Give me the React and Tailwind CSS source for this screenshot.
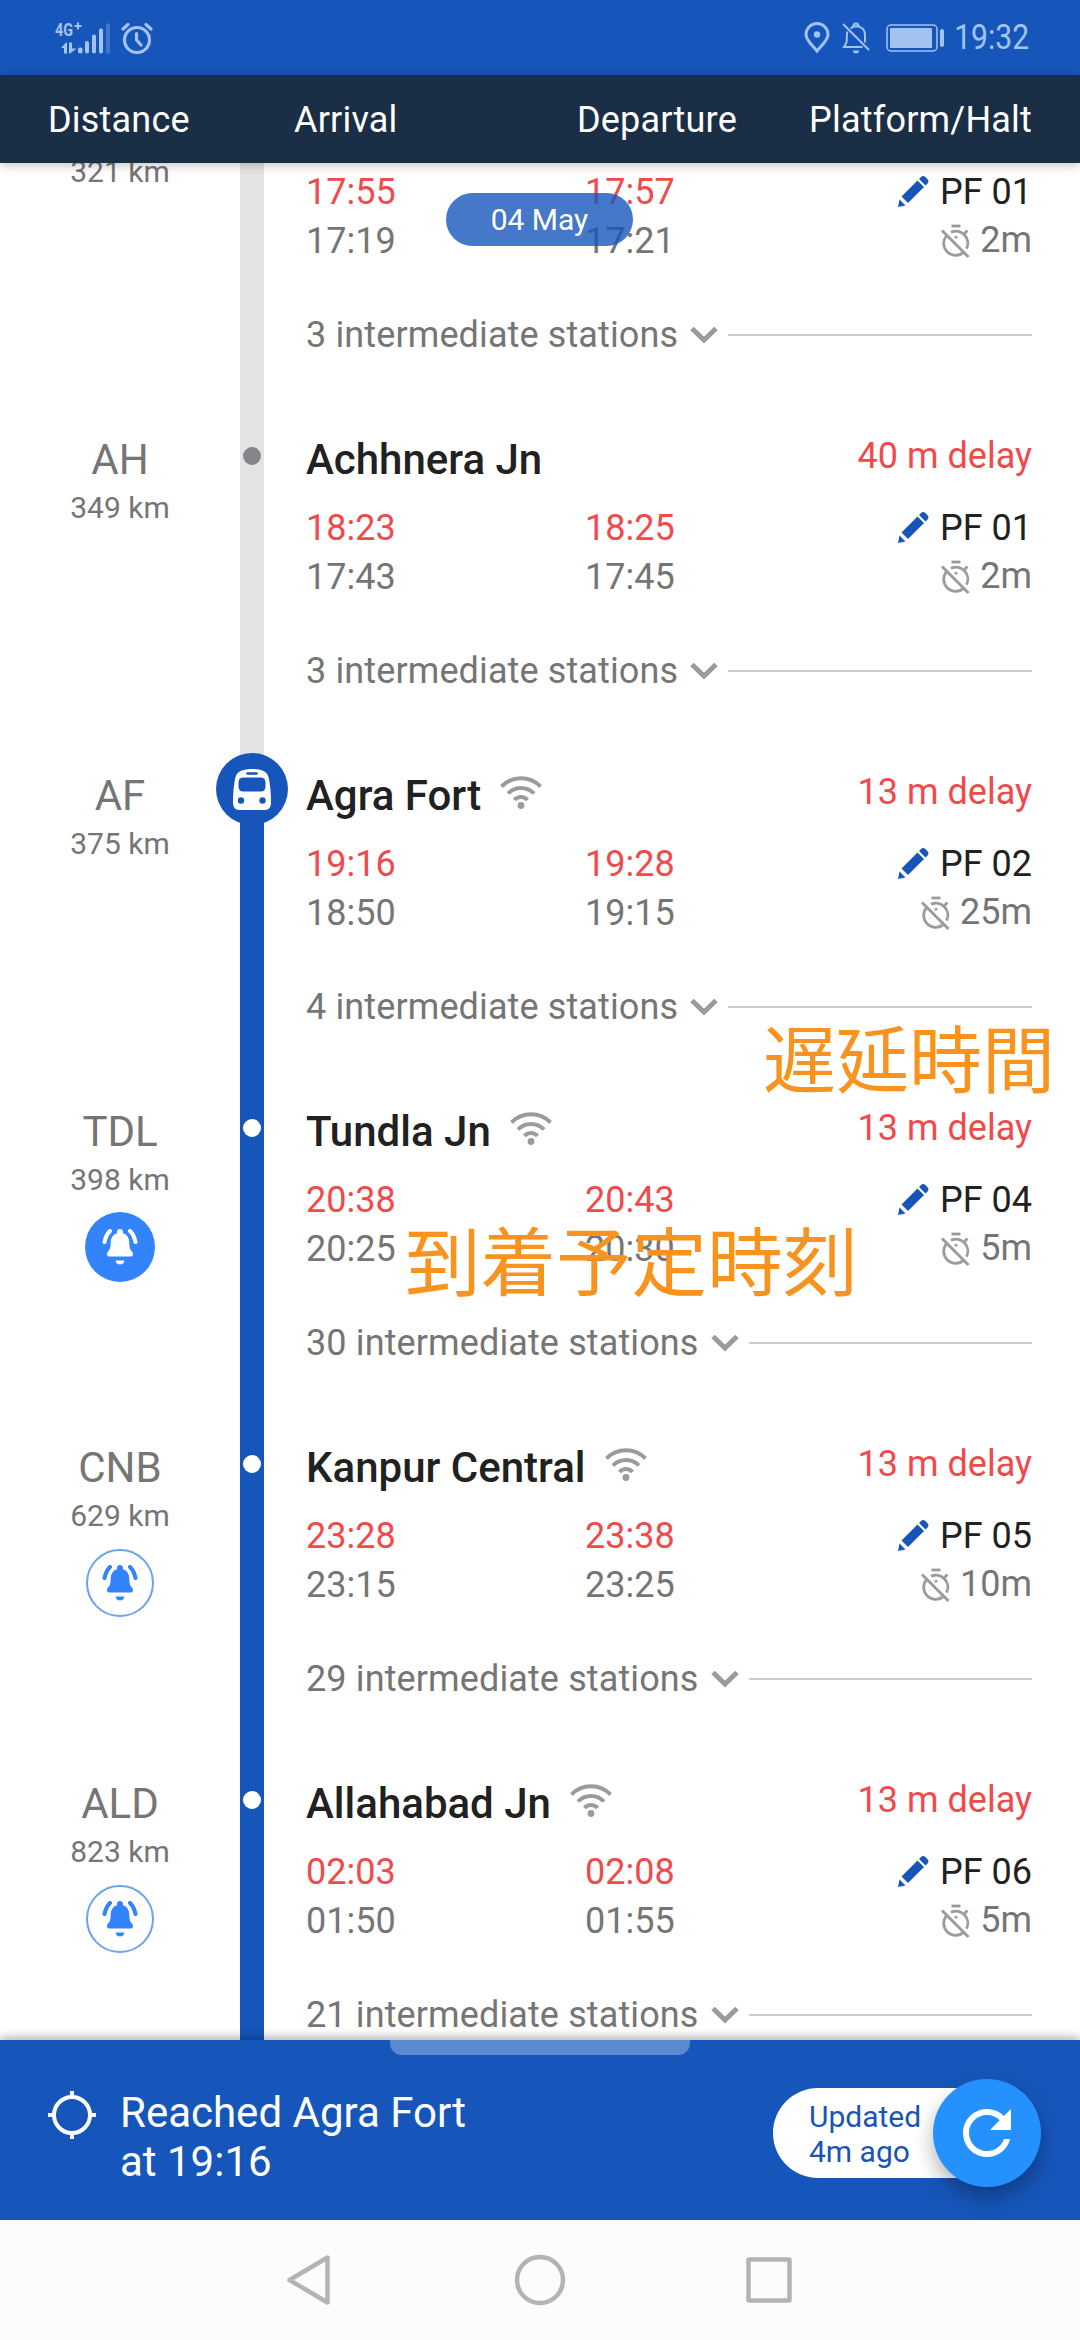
import { MdRefresh } from "react-icons/md";

// the first stop is scrolled half way under the header, only its lower part shows
const stations = [
    { km: 321, arr: ["17:55", "17:19"], dep: ["17:57", "17:21"], pf: "PF 01", halt: "2m", between: 3, passed: true },
    { code: "AH", km: 349, name: "Achhnera Jn", delay: "40 m delay", arr: ["18:23", "17:43"], dep: ["18:25", "17:45"], pf: "PF 01", halt: "2m", between: 3, passed: true },
    { code: "AF", km: 375, name: "Agra Fort", wifi: true, delay: "13 m delay", arr: ["19:16", "18:50"], dep: ["19:28", "19:15"], pf: "PF 02", halt: "25m", between: 4, current: true },
    { code: "TDL", km: 398, name: "Tundla Jn", wifi: true, delay: "13 m delay", arr: ["20:38", "20:25"], dep: ["20:43", "20:30"], pf: "PF 04", halt: "5m", between: 30, alarm: "on" },
    { code: "CNB", km: 629, name: "Kanpur Central", wifi: true, delay: "13 m delay", arr: ["23:28", "23:15"], dep: ["23:38", "23:25"], pf: "PF 05", halt: "10m", between: 29, alarm: "off" },
    { code: "ALD", km: 823, name: "Allahabad Jn", wifi: true, delay: "13 m delay", arr: ["02:03", "01:50"], dep: ["02:08", "01:55"], pf: "PF 06", halt: "5m", between: 21, alarm: "off" },
];

const SignalIcon = () => (
    <svg width="56" height="34" viewBox="0 0 56 34" fill="currentColor">
        <text x="0" y="15" fontSize="19" fontWeight="700" fontFamily="Roboto, sans-serif" textLength="18" lengthAdjust="spacingAndGlyphs">4G</text>
        <path d="M19.500 5h7M23 1.500v7" stroke="currentColor" strokeWidth="2" />
        <path d="M6 27l5-5.500h1V32.500H9V27zM14 21.500h3v6h4.500l-6.500 5h-1z" />
        <rect x="23" y="26.500" width="4.500" height="6" rx="2" />
        <rect x="30" y="20" width="4" height="12.500" rx="2" />
        <rect x="37" y="13.500" width="4" height="19" rx="2" />
        <rect x="44" y="7.500" width="4" height="25" rx="2" />
        <rect x="51" y="2.500" width="4" height="30" rx="1" opacity="0.3" />
    </svg>
);

const AlarmClockIcon = () => (
    <svg width="32" height="32" viewBox="0 0 32 32" fill="none" stroke="currentColor" strokeWidth="3.200" strokeLinecap="round">
        <circle cx="16" cy="18" r="12.500" />
        <path d="M15.500 11.500v6.500l4.500 5" />
        <path d="M2 7l5-4.500M30 7l-5-4.500" />
    </svg>
);

const PinIcon = () => (
    <svg width="26" height="32" viewBox="0 0 26 32" fill="none" stroke="currentColor" strokeWidth="3">
        <path d="M13 29C9 24 2 18.500 2 12.500a11 11 0 0 1 22 0C24 18.500 17 24 13 29z" />
        <circle cx="13" cy="12.500" r="3.200" fill="currentColor" stroke="none" />
    </svg>
);

const BellOffIcon = () => (
    <svg width="28" height="32" viewBox="0 0 28 32" fill="none" stroke="currentColor" strokeWidth="2">
        <path d="M5.500 9.500C4.500 12 5 18 4.500 20.500L2 25h18.500M8.500 6.500C13 2.500 23 4 23 13v7.500" />
        <path d="M11.500 4a2.500 2.500 0 0 1 5 0" />
        <path d="M1 2l26 26" />
        <path d="M11 28.500h6a3 3 0 0 1-6 0z" fill="currentColor" stroke="none" />
    </svg>
);

const BatteryIcon = () => (
    <svg width="59" height="28" viewBox="0 0 59 28" fill="currentColor">
        <rect x="1" y="1" width="50" height="26" rx="4" fill="none" stroke="currentColor" strokeWidth="1.500" />
        <rect x="4" y="4" width="42" height="20" rx="1" />
        <rect x="54" y="5" width="4" height="18" rx="2" />
    </svg>
);

const WifiIcon = () => (
    <svg width="42" height="34" viewBox="0 0 42 34" fill="none" stroke="#9b9b9b" strokeWidth="4">
        <path d="M1.500 10.500C12 -.5 30 -.5 40.500 10.500" />
        <path d="M8 17.500C15 10 27 10 34 17.500" />
        <path d="M14.500 24C18 20 24 20 27.500 24" />
        <circle cx="21" cy="29.500" r="3.400" fill="#9b9b9b" stroke="none" />
    </svg>
);

const PencilIcon = () => (
    <svg width="31" height="31" viewBox="0 0 31 31" fill="#1656ba">
        <path d="M1.500 23.500L7.500 29.500 0 31z" />
        <path d="M3.500 20.500L19.500 4.500l6.500 6.500-16 16z" />
        <path d="M21 3l2-2c1.300-1.300 3-1.300 4.300 0l2.200 2.200c1.300 1.300 1.300 3 0 4.300l-2 2z" />
    </svg>
);

const TimerOffIcon = () => (
    <svg width="30" height="34" viewBox="0 0 30 34" fill="none" stroke="#9b9b9b" strokeWidth="2.800">
        <path d="M10.500 2h9" />
        <path d="M10 8.200a12 12 0 0 1 15.500 16.500M21.800 29A12 12 0 0 1 5.200 12" />
        <path d="M23.500 9.500l3-3" />
        <path d="M15 12v2.500" />
        <path d="M1 6.500l26.500 26.500" />
    </svg>
);

const ChevronIcon = () => (
    <svg width="28" height="18" viewBox="0 0 28 18" fill="none" stroke="#9b9b9b" strokeWidth="5">
        <path d="M2 2.500L14 14 26 2.500" />
    </svg>
);

const BusIcon = () => (
    <svg width="38" height="41" viewBox="0 0 38 41">
        <path d="M19 0c8 0 15 2 16.500 8C37 14 38 24 38 33c0 5-2 8-6 8H6c-4 0-6-3-6-8C0 24 1 14 2.500 8 4 2 11 0 19 0z" fill="#fff" />
        <path d="M14.500 4.500h9" stroke="#1656ba" strokeWidth="2.600" strokeLinecap="round" />
        <rect x="5.500" y="8.500" width="27" height="14" rx="4.500" fill="#1656ba" />
        <circle cx="8" cy="31.500" r="3.200" fill="#1656ba" />
        <circle cx="29.500" cy="31.500" r="3.200" fill="#1656ba" />
    </svg>
);

const BellIcon = () => (
    <svg width="36" height="36" viewBox="0 0 36 36" fill="currentColor">
        <path d="M18 0c1.800 0 3 1.200 3 3v1.200c4 1.300 6.300 4.800 6.300 9.300 0 5 .7 7 3 9.500 1.500 2 .7 4.500-1.800 4.500h-21c-2.500 0-3.300-2.500-1.800-4.500 2.300-2.500 3-4.500 3-9.500C8.700 9 11 5.500 15 4.200V3c0-1.800 1.200-3 3-3z" />
        <path d="M13.500 31.500h9c-.5 2.500-2.200 4-4.500 4s-4-1.500-4.500-4z" />
        <path d="M8 2C5 5 3.500 8 2.500 13M28 2c3 3 4.500 6 5.500 11" fill="none" stroke="currentColor" strokeWidth="4" strokeLinecap="round" />
    </svg>
);

const CrosshairIcon = () => (
    <svg width="48" height="48" viewBox="0 0 48 48" fill="none" stroke="#fff" strokeWidth="4">
        <circle cx="24" cy="24" r="18" />
        <path d="M24 0v6M24 42v6M0 24h6M42 24h6" />
    </svg>
);

const StatusBar = () => (
    <div className="flex h-[75px] items-center justify-between bg-[#1656ba] pr-[51px] pl-[55px] text-[#a4c2ef]">
        <div className="flex items-center gap-[10px]">
            <SignalIcon />
            <AlarmClockIcon />
        </div>
        <div className="flex items-center">
            <PinIcon />
            <div className="ml-3"><BellOffIcon /></div>
            <div className="ml-4"><BatteryIcon /></div>
            <span className="-ml-[3px] origin-right scale-x-[0.86] pt-px text-[35px] leading-[40px]">19:32</span>
        </div>
    </div>
);

const TableHeader = () => (
    <div className="relative z-10 grid h-[88px] grid-cols-[246px_283px_1fr_auto] items-center bg-[#1a2e46] pt-[2px] pr-12 pl-12 text-[36px] tracking-[0.2px] text-white shadow-[0_2px_10px_rgba(0,0,0,0.25)]">
        <span>Distance</span>
        <span>Arrival</span>
        <span>Departure</span>
        <span>Platform/Halt</span>
    </div>
);

const Rail = ({ passed, current }) => (
    <div className="relative flex justify-center">
        <div className={passed ? "w-6 bg-[#e4e4e4]" : "w-6 bg-[#1656ba]"} />
        {current && <div className="absolute top-0 left-6 h-12 w-6 bg-[#e4e4e4]" />}
        {current ? (
            <div className="absolute top-[9px] left-0 flex h-[72px] w-[72px] items-center justify-center rounded-full bg-[#1656ba]">
                <BusIcon />
            </div>
        ) : (
            <div className={passed ? "absolute top-[39px] left-[27px] h-[18px] w-[18px] rounded-full bg-[#85858a]" : "absolute top-[39px] left-[27px] h-[18px] w-[18px] rounded-full bg-white"} />
        )}
    </div>
);

const Alarm = ({ state }) => (
    <div className={state === "on"
        ? "mt-[14px] flex h-[70px] w-[70px] items-center justify-center rounded-full bg-[#3384fa] text-white"
        : "mt-[15px] flex h-[68px] w-[68px] items-center justify-center rounded-full border-2 border-[#6ba2f1] text-[#3384fa]"}
    >
        <BellIcon />
    </div>
);

const Times = ({ times }) => (
    <div className="flex flex-col">
        <span className="text-[#ef4a4c]">{times[0]}</span>
        <span>{times[1]}</span>
    </div>
);

const StationRow = ({ station }) => (
    <div className="grid h-[336px] shrink-0 grid-cols-[216px_72px_1fr]">
        <div className="flex flex-col items-center pt-[28px] pl-6 text-[#757575]">
            <div className="h-12 text-[42px] leading-[48px]">{station.code}</div>
            <span className="mt-[6px] text-[30px] leading-[36px]">{station.km} km</span>
            {station.alarm && <Alarm state={station.alarm} />}
        </div>
        <Rail passed={station.passed} current={station.current} />
        <div className="flex flex-col pt-[24px] pr-12 pl-[18px] text-[36px] text-[#757575]">
            <div className="flex h-[72px] items-start justify-between">
                <div className="flex items-start gap-[19px] pt-[4px]">
                    <span className="text-[42px] leading-[48px] font-medium text-[#212121]">{station.name}</span>
                    {station.wifi && <div className="pt-1"><WifiIcon /></div>}
                </div>
                <span className="leading-[48px] text-[#ef4a4c]">{station.delay}</span>
            </div>
            <div className="grid h-[143px] grid-cols-[279px_1fr_auto] items-start leading-[49px]">
                <Times times={station.arr} />
                <Times times={station.dep} />
                <div className="flex flex-col items-end">
                    <div className="flex items-center gap-[11px] text-[#212121]">
                        <div className="pb-[3px]"><PencilIcon /></div>
                        <span>{station.pf}</span>
                    </div>
                    <div className="flex items-center gap-[9px] leading-[47px]">
                        <TimerOffIcon />
                        <span>{station.halt}</span>
                    </div>
                </div>
            </div>
            <div className="flex items-center leading-[48px]">
                <span className="tracking-[0.12px]">{station.between} intermediate stations</span>
                <div className="mr-[10px] ml-3"><ChevronIcon /></div>
                <div className="h-[2px] flex-1 bg-[#cccccc]" />
            </div>
        </div>
    </div>
);

const StatusPanel = () => (
    <div className="relative z-10 flex h-[180px] items-start justify-between bg-[#1656ba] pr-[39px] pl-12 text-white shadow-[0_-2px_10px_rgba(0,0,0,0.35)]">
        <div className="absolute top-0 left-[390px] h-[15px] w-[300px] rounded-b-xl bg-white/30" />
        <div className="flex gap-6 pt-[48px]">
            <div className="pt-[3px]"><CrosshairIcon /></div>
            <p className="text-[42px] leading-[49px]">
                Reached Agra Fort
                <br />
                at 19:16
            </p>
        </div>
        <div className="flex items-center pt-[39px]">
            <div className="flex h-[90px] w-[214px] items-center rounded-l-full bg-white pt-px pl-9 text-[30px] leading-[35px] text-[#1a55b3]">
                <span>Updated<br />4m ago</span>
            </div>
            <button className="-ml-[54px] flex h-[108px] w-[108px] items-center justify-center rounded-full bg-[#2491ff] shadow-[0_10px_20px_rgba(0,0,0,0.3)]">
                <MdRefresh className="text-[72px]" />
            </button>
        </div>
    </div>
);

const NavBar = () => (
    <div className="relative z-20 flex h-[120px] items-center bg-[#fcfcfc] pl-[286px]">
        <svg width="508" height="52" viewBox="0 0 508 52" fill="none" stroke="#b3b3b3" strokeWidth="4.500" strokeLinejoin="round">
            <path d="M41.500 3.500v45L3.500 26z" />
            <circle cx="254" cy="26" r="23" />
            <rect x="462.500" y="5.500" width="41" height="41" rx="1" />
        </svg>
    </div>
);

export default function App() {
    return (
        <div className="flex h-[2340px] w-[1080px] flex-col overflow-hidden bg-white font-[Roboto,sans-serif]">
            <StatusBar />
            <TableHeader />
            <div className="relative h-[1877px] overflow-hidden">
                <div className="-mt-[91px] flex flex-col">
                    {stations.map((s) => (
                        <StationRow key={s.km} station={s} />
                    ))}
                </div>
                <div className="absolute top-[30px] left-[446px] flex h-[53px] w-[187px] items-center justify-center rounded-full bg-[#1656ba]/80 text-[30px] text-white">
                    04 May
                </div>
                <div className="absolute top-[840px] left-[763px] font-['Noto_Sans_CJK_JP',sans-serif] text-[73px] leading-[104px] whitespace-nowrap text-[#f7931e]">
                    遅延時間
                </div>
                <div className="absolute top-[1042px] left-[405px] font-['Noto_Sans_CJK_JP',sans-serif] text-[75.500px] leading-[104px] whitespace-nowrap text-[#f7931e]">
                    到着予定時刻
                </div>
            </div>
            <StatusPanel />
            <NavBar />
        </div>
    );
}
